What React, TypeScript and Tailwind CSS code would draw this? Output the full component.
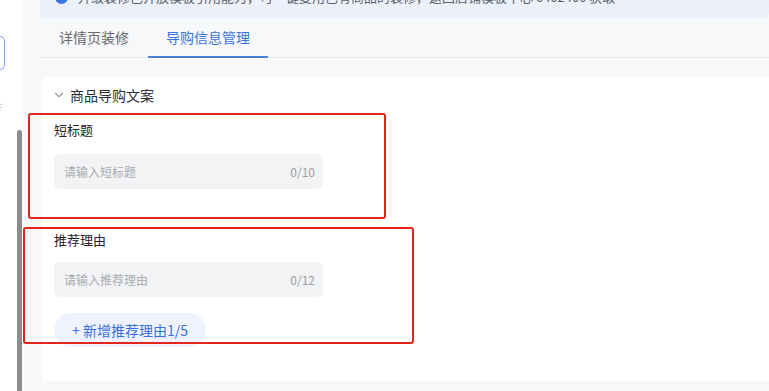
import { ChevronDown } from 'lucide-react'

const font = { fontFamily: '"Noto Sans CJK SC", "Noto Sans", sans-serif' }

function Field({ placeholder, max }: { placeholder: string; max: string }) {
  return (
    <div className="w-[269px] h-[35px] rounded-[6px] bg-[#f2f3f5] flex items-center justify-between pl-[10px] pr-[8px]">
      <span className="text-[12px] text-[#a9abb0]">{placeholder}</span>
      <span className="text-[12px] text-[#9b9da2]">{max}</span>
    </div>
  )
}

export default function App() {
  return (
    <div className="relative w-[769px] h-[391px] overflow-hidden flex bg-white" style={font}>
      {/* left sidebar sliver */}
      <div className="relative w-[23px] shrink-0 bg-white">
        <div className="absolute -left-[30px] top-[36px] w-[35px] h-[34px] rounded-[5px] border border-[#7fa0e6]" />
        <span className="absolute -left-[10px] top-[97px] text-[12px] text-[#bbb]">卷</span>
        <div className="absolute left-[17px] top-[130px] bottom-0 w-[5px] rounded-t-[3px] bg-[#8c8c8c]" />
      </div>

      {/* main */}
      <div className="flex-1 bg-[#f7f8fa] pl-[17px] flex flex-col">
        <div className="h-[18px] shrink-0 overflow-hidden rounded-b-[6px] bg-[#ebf0fa] pl-[15px]">
          <div className="-mt-[11px] h-[16px] flex items-center gap-[10px] whitespace-nowrap">
            <span className="w-[13px] h-[13px] rounded-full bg-[#3b73e0]" />
            <span className="text-[13px] text-[#5a5f68]">
              升级装修已开放模板引用能力，可一键复用已有商品的装修，返回店铺模板中心 0402400 获取
            </span>
          </div>
        </div>

        <div className="h-[40px] shrink-0 flex items-stretch border-b border-[#e6e8ec]">
          <div className="px-[19px] flex items-center text-[14px] text-[#666a70]">详情页装修</div>
          <div className="relative px-[18px] flex items-center text-[14px] text-[#3d74db]">
            导购信息管理
            <div className="absolute left-0 right-0 -bottom-px h-[2px] bg-[#4a7fd4]" />
          </div>
        </div>

        <div className="ml-[2px] mt-[19px] h-[304px] bg-white pl-[10px] pt-[9px]">
          <div className="h-[18px] flex items-center gap-[4px] text-[14px] text-[#2b2d31]">
            <ChevronDown size={14} strokeWidth={1.6} className="text-[#444]" />
            <span>商品导购文案</span>
          </div>
          <div className="pl-[2px]">
            <div className="mt-[16px] h-[20px] leading-[20px] text-[13px] text-[#1f2126]">短标题</div>
            <div className="mt-[14px]">
              <Field placeholder="请输入短标题" max="0/10" />
            </div>
            <div className="mt-[41px] h-[20px] leading-[20px] text-[13px] text-[#1f2126]">推荐理由</div>
            <div className="mt-[12px]">
              <Field placeholder="请输入推荐理由" max="0/12" />
            </div>
            <button className="mt-[16px] h-[34px] w-[152px] rounded-full bg-[#eef3fe] text-[14px] text-[#3a6fe0] flex items-center justify-center">
              + 新增推荐理由1/5
            </button>
          </div>
        </div>
      </div>

      {/* annotation boxes */}
      <div className="pointer-events-none absolute left-[28px] top-[113px] w-[358px] h-[106px] rounded-[3px] border-2 border-[#e3261c]" />
      <div className="pointer-events-none absolute left-[23px] top-[227px] w-[391px] h-[117px] rounded-[3px] border-2 border-[#e3261c]" />
    </div>
  )
}
